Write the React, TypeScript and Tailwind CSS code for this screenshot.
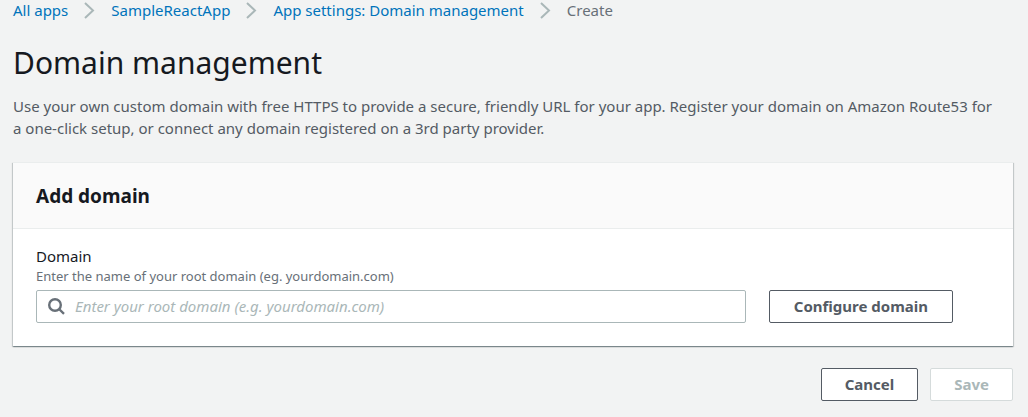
import React from "react";

const crumbs = ["All apps", "SampleReactApp", "App settings: Domain management"];

function Chevron() {
  return (
    <svg aria-hidden="true" width="11" height="18" viewBox="0 0 11 18" fill="none" stroke="#aab7b8" strokeWidth="2" className="mx-4 shrink-0">
      <path d="M1 2l8 7.5L1 17" />
    </svg>
  );
}

export default function App() {
  return (
    <div className="min-h-screen bg-[#f2f3f3] pr-[15px] pb-4 pl-[13px] font-['Noto_Sans',sans-serif] text-[15px] text-[#545b64]">
      <nav aria-label="Breadcrumb">
        <ol className="flex h-5 items-center whitespace-nowrap">
          {crumbs.map((label) => (
            <li key={label} className="flex items-center">
              <a href="#" className="text-[#0073bb]">{label}</a>
              <Chevron />
            </li>
          ))}
          <li aria-current="page" className="text-[#687078]">Create</li>
        </ol>
      </nav>
      <h1 className="mt-[22px] text-[30px] leading-[42px] text-[#16191f]">Domain management</h1>
      <p className="mt-[11px] pr-4 leading-[22px]">
        Use your own custom domain with free HTTPS to provide a secure, friendly URL for your app. Register your domain on Amazon Route53 for a one-click setup, or connect any domain registered on a 3rd party provider.
      </p>
      <form onSubmit={(e) => e.preventDefault()}>
        <section className="mt-[23px] border-t border-[#eaeded] bg-white shadow-[0_1px_1px_0_rgba(0,28,36,0.3),1px_1px_1px_0_rgba(0,28,36,0.15),-1px_1px_1px_0_rgba(0,28,36,0.15)]">
          <header className="border-b border-[#eaeded] bg-[#fafafa] px-[23px] pt-[19px] pb-[18px]">
            <h2 className="text-[19px] leading-7 font-bold text-[#16191f]">Add domain</h2>
          </header>
          <div className="px-[23px] pt-4 pb-[23px]">
            <label htmlFor="domain" className="block leading-[22px] text-[#16191f]">Domain</label>
            <p id="domain-hint" className="text-[13px] leading-[18px] text-[#687078]">Enter the name of your root domain (eg. yourdomain.com)</p>
            <div className="mt-[5px] flex gap-[23px] pr-[37px]">
              <div className="flex h-[33px] min-w-0 grow items-center rounded-xs border border-[#aab7b8] bg-white pl-[11px]">
                <svg aria-hidden="true" width="17" height="17" viewBox="0 0 17 17" fill="none" stroke="#687078" strokeWidth="2.4" className="shrink-0">
                  <circle cx="7" cy="7" r="5.8" />
                  <path d="M11 11l5 4.8" />
                </svg>
                <input id="domain" type="text" aria-describedby="domain-hint" placeholder="Enter your root domain (e.g. yourdomain.com)" className="ml-[10px] h-full min-w-0 grow pb-0.5 text-[#16191f] outline-none placeholder:text-[#aab7b8] placeholder:italic" />
              </div>
              <button type="button" className="h-[33px] shrink-0 rounded-xs border border-[#545b64] bg-white px-6 pb-px font-bold">Configure domain</button>
            </div>
          </div>
        </section>
        <div className="mt-[22px] flex justify-end gap-3">
          <button type="button" className="h-[33px] rounded-xs border border-[#545b64] bg-white px-[23px] pb-px font-bold">Cancel</button>
          <button type="submit" disabled className="h-[33px] rounded-xs border border-[#d5dbdb] bg-white px-[23px] pb-px font-bold text-[#aab7b8]">Save</button>
        </div>
      </form>
    </div>
  );
}
